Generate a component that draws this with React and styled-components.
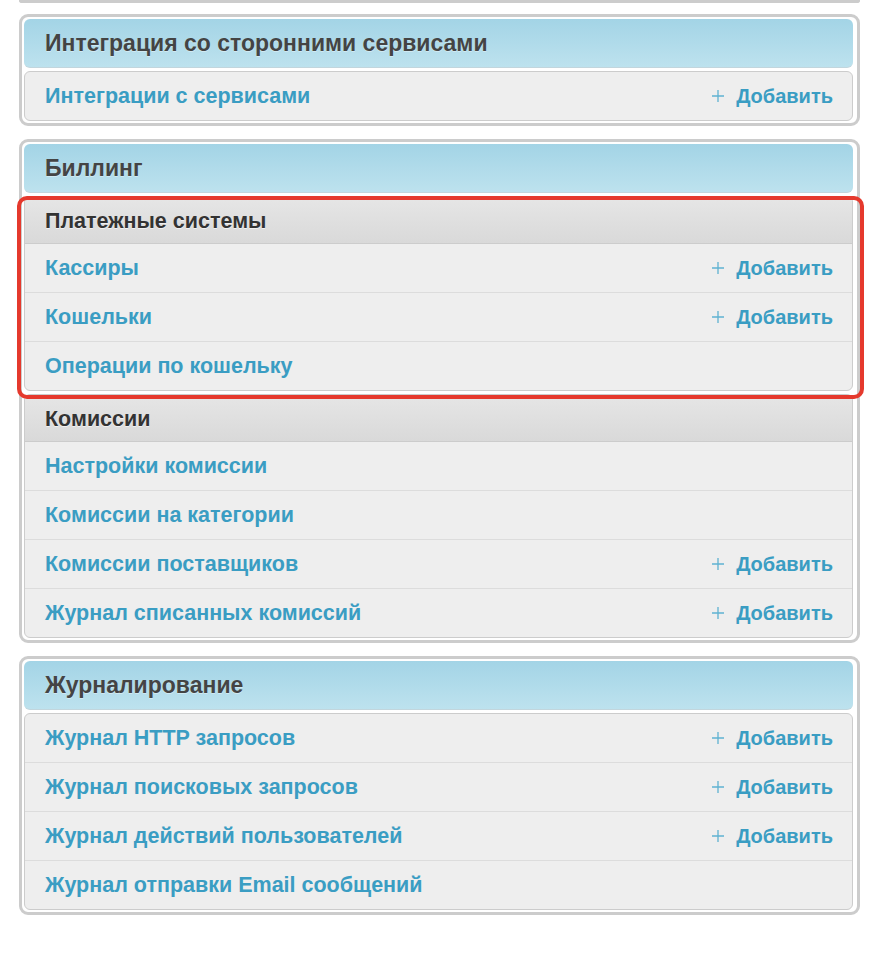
import React from 'react';
import styled, { createGlobalStyle } from 'styled-components';

const GlobalStyle = createGlobalStyle`
  body {
    margin: 0;
    background: #fff;
    font-family: "Liberation Sans", Arial, sans-serif;
  }
`;

const Page = styled.div`
  padding: 0 20px 0 19px;
`;

// bottom edge of the module cut off above the screenshot
const ModuleTail = styled.div`
  height: 0;
  border: 3px solid #ccc;
  border-top: none;
  border-radius: 0 0 9px 9px;
  margin-bottom: 11px;
`;

const Module = styled.div`
  border: 3px solid #ccc;
  border-radius: 9px;
  background: #fff;
  padding: 2px 4px 2px 2px;
  display: flex;
  flex-direction: column;
  gap: 3px;
  margin-bottom: 13px;
`;

const Caption = styled.div`
  height: 48px;
  display: flex;
  align-items: center;
  padding-left: 21px;
  border-radius: 6px;
  background: linear-gradient(#a3d4e6, #bde2ee);
  border-bottom: 1px solid #c2d6dd;
  color: #444;
  font-size: 23px;
  font-weight: bold;
  text-shadow: 0 1px 0 rgba(255, 255, 255, 0.4);
`;

const Group = styled.div`
  border: 1px solid #ccc;
  border-radius: 6px;
  background: #eee;
  overflow: hidden;
`;

const Highlight = styled.div`
  position: relative;

  &::after {
    content: '';
    position: absolute;
    top: 0;
    left: -7px;
    right: -11px;
    bottom: -8px;
    border: 4px solid #e5392d;
    border-radius: 10px;
    pointer-events: none;
  }
`;

const SubCaption = styled.div`
  height: 44px;
  padding: 2px 0 0 20px;
  display: flex;
  align-items: center;
  background: linear-gradient(#e6e6e6, #d9d9d9);
  border-bottom: 1px solid #ccc;
  color: #333;
  font-size: 21.5px;
  font-weight: bold;
  text-shadow: 0 1px 0 rgba(255, 255, 255, 0.6);
`;

const Row = styled.div`
  height: 48px;
  display: flex;
  align-items: center;
  justify-content: space-between;
  padding: 0 19px 0 20px;

  & + & {
    border-top: 1px solid #dcdcdc;
  }
`;

const Link = styled.a`
  color: #3a9dc3;
  font-size: 21.5px;
  font-weight: bold;
  text-decoration: none;
`;

const AddLink = styled(Link)`
  display: flex;
  align-items: center;
  gap: 12px;
  font-size: 20px;
`;

const PlusIcon = () => (
  <svg width="12" height="12" viewBox="0 0 12 12">
    <path d="M6 0v12M0 6h12" stroke="#5fb2d2" strokeWidth="1.3" />
  </svg>
);

const Item = ({ title, add }) => (
  <Row>
    <Link href="#">{title}</Link>
    {add && (
      <AddLink href="#">
        <PlusIcon />
        Добавить
      </AddLink>
    )}
  </Row>
);

const Section = ({ title, items }) => (
  <Group>
    {title && <SubCaption>{title}</SubCaption>}
    {items.map(it => (
      <Item key={it.title} {...it} />
    ))}
  </Group>
);

export default function App() {
  return (
    <Page>
      <GlobalStyle />
      <ModuleTail />

      <Module>
        <Caption>Интеграция со сторонними сервисами</Caption>
        <Section items={[{ title: 'Интеграции с сервисами', add: true }]} />
      </Module>

      <Module>
        <Caption>Биллинг</Caption>
        <Highlight>
          <Section
            title="Платежные системы"
            items={[
              { title: 'Кассиры', add: true },
              { title: 'Кошельки', add: true },
              { title: 'Операции по кошельку' },
            ]}
          />
        </Highlight>
        <Section
          title="Комиссии"
          items={[
            { title: 'Настройки комиссии' },
            { title: 'Комиссии на категории' },
            { title: 'Комиссии поставщиков', add: true },
            { title: 'Журнал списанных комиссий', add: true },
          ]}
        />
      </Module>

      <Module>
        <Caption>Журналирование</Caption>
        <Section
          items={[
            { title: 'Журнал HTTP запросов', add: true },
            { title: 'Журнал поисковых запросов', add: true },
            { title: 'Журнал действий пользователей', add: true },
            { title: 'Журнал отправки Email сообщений' },
          ]}
        />
      </Module>
    </Page>
  );
}
